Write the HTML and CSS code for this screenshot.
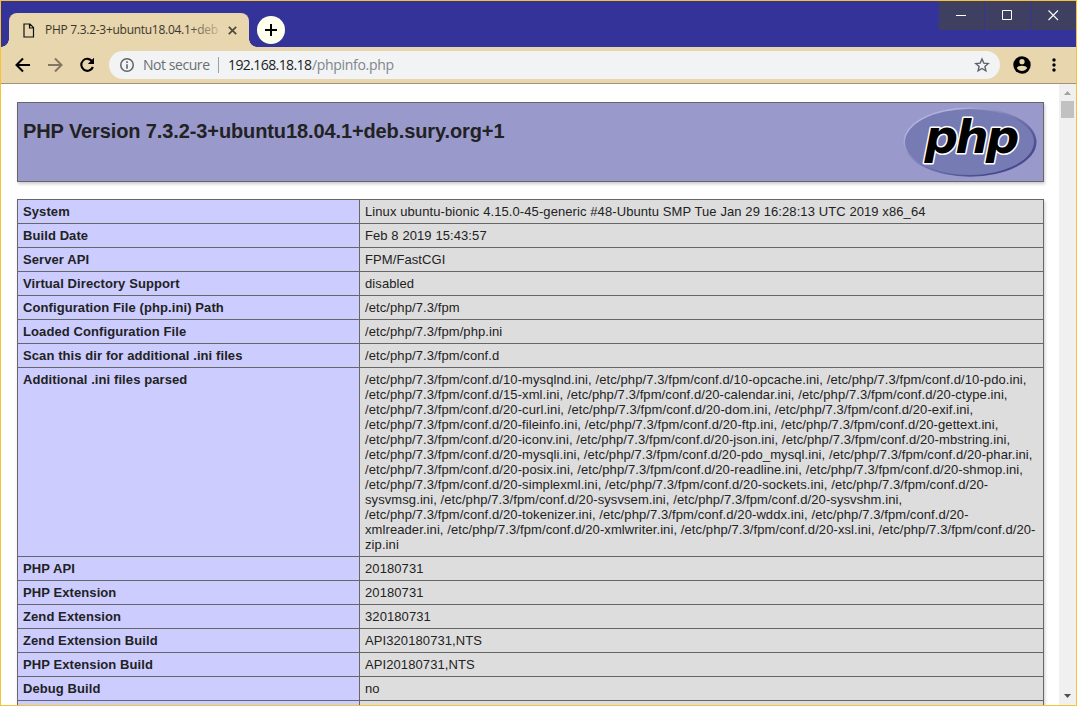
FILE: index.html
```html
<!DOCTYPE html>
<html lang="en">
<head>
<meta charset="utf-8">
<title>PHP 7.3.2-3+ubuntu18.04.1+deb.sury.org+1 - phpinfo()</title>
<link rel="stylesheet" href="styles.css">
</head>
<body>
<div class="window">
  <header class="titlebar">
    <div class="tab">
      <svg class="tab-icon" width="12" height="15" viewBox="0 0 12 15"><path d="M1 1h6l3.500 3.500V14H1z M6.500 1v4H10.500" fill="none" stroke="#111" stroke-width="1.200"/></svg>
      <span class="tab-title"><svg width="174" height="20"><defs><linearGradient id="fade" gradientUnits="userSpaceOnUse" x1="142" x2="175" y1="0" y2="0"><stop offset="0" stop-color="#3b352a"/><stop offset="1" stop-color="#3b352a" stop-opacity=".15"/></linearGradient></defs><text x="0" y="14" textLength="173" fill="url(#fade)">PHP 7.3.2-3+ubuntu18.04.1+deb</text></svg></span>
      <svg class="tab-close" width="9" height="9" viewBox="0 0 9 9"><path d="M.8.8l7.4 7.4M8.2.8L.8 8.2" stroke="#50493b" stroke-width="1.7"/></svg>
    </div>
    <div class="new-tab"><svg width="14" height="14" viewBox="0 0 14 14"><path d="M7 1v12M1 7h12" stroke="#000" stroke-width="2"/></svg></div>
    <div class="controls">
      <div class="control"><svg width="11" height="11"><path d="M0 5.5h10" stroke="#fff"/></svg></div>
      <div class="control"><svg width="11" height="11"><path d="M.5.5h9v9h-9z" fill="none" stroke="#fff"/></svg></div>
      <div class="control"><svg width="11" height="11"><path d="M.5.5l9.500 9.500M10 .5L.5 10" stroke="#fff" stroke-width="1.1"/></svg></div>
    </div>
  </header>
  <nav class="toolbar">
    <svg class="nav-icon" width="16" height="16" viewBox="0 0 16 16"><path d="M15 8H2M8 1.500L1.500 8 8 14.500" fill="none" stroke="#000" stroke-width="2"/></svg>
    <svg class="nav-icon" width="16" height="16" viewBox="0 0 16 16"><path d="M1 8h13M8 1.500L14.500 8 8 14.500" fill="none" stroke="#827763" stroke-width="2"/></svg>
    <svg class="nav-icon" width="16" height="16" viewBox="0 0 16 16"><path d="M13.300 4.500A6 6 0 1 0 13.900 10" fill="none" stroke="#000" stroke-width="2.100"/><path d="M15 .8V7H8.800z"/></svg>
    <div class="omnibox">
      <svg class="info-icon" width="14" height="14" viewBox="0 0 14 14"><circle cx="7" cy="7" r="6.250" fill="none" stroke="#5f6368" stroke-width="1.500"/><path d="M7 3.300v1.700M7 6.200v4.500" stroke="#5f6368" stroke-width="1.600"/></svg>
      <svg class="address" width="260" height="24"><text class="muted" x="0" y="17" textLength="67">Not secure</text><path d="M75.500 4v16" stroke="#9ba0a5"/><text class="host" x="85" y="17" textLength="84">192.168.18.18</text><text class="path" x="169" y="17" textLength="82">/phpinfo.php</text></svg>
      <svg class="star" width="16" height="16" viewBox="0 0 16 16"><path d="M8 2l1.800 4.100 4.400.4-3.300 2.900 1 4.400L8 11.500l-3.900 2.300 1-4.400-3.300-2.900 4.400-.4z" fill="none" stroke="#5f6368" stroke-width="1.400"/></svg>
    </div>
    <svg class="avatar" width="18" height="18" viewBox="0 0 18 18"><circle cx="9" cy="9" r="8.700"/><circle cx="9" cy="5.700" r="2.600" fill="#e7d6ae"/><path d="M3.800 12c1.200-3.100 9.200-3.100 10.400 0-2.400 3.900-8 3.900-10.400 0z" fill="#e7d6ae"/></svg>
    <svg class="menu" width="4" height="14" viewBox="0 0 4 14"><circle cx="2" cy="2" r="1.700"/><circle cx="2" cy="7" r="1.700"/><circle cx="2" cy="12" r="1.700"/></svg>
  </nav>
  <div class="viewport">
    <main class="page">
      <section class="banner">
        <h1>PHP Version 7.3.2-3+ubuntu18.04.1+deb.sury.org+1</h1>
        <svg class="logo" width="134" height="72" viewBox="0 0 134 72">
          <defs><linearGradient id="rim" x1="0" y1="0" x2="1" y2="1"><stop offset=".2" stop-color="#b0b3dc"/><stop offset=".5" stop-color="#7075ae"/><stop offset=".8" stop-color="#484a8d"/></linearGradient></defs>
          <ellipse cx="67" cy="35" rx="66.500" ry="34.700" fill="url(#rim)"/>
          <ellipse cx="66.500" cy="35" rx="64.500" ry="32.900" fill="#777bb3"/>
          <text class="logo-text" x="21.500" y="46" textLength="95">php</text>
        </svg>
      </section>
      <table class="info">
        <tr><th>System</th><td>Linux ubuntu-bionic 4.15.0-45-generic #48-Ubuntu SMP Tue Jan 29 16:28:13 UTC 2019 x86_64</td></tr>
        <tr><th>Build Date</th><td>Feb 8 2019 15:43:57</td></tr>
        <tr><th>Server API</th><td>FPM/FastCGI</td></tr>
        <tr><th>Virtual Directory Support</th><td>disabled</td></tr>
        <tr><th>Configuration File (php.ini) Path</th><td>/etc/php/7.3/fpm</td></tr>
        <tr><th>Loaded Configuration File</th><td>/etc/php/7.3/fpm/php.ini</td></tr>
        <tr><th>Scan this dir for additional .ini files</th><td>/etc/php/7.3/fpm/conf.d</td></tr>
        <tr><th>Additional .ini files parsed</th><td>/etc/php/7.3/fpm/conf.d/10-mysqlnd.ini, /etc/php/7.3/fpm/conf.d/10-opcache.ini, /etc/php/7.3/fpm/conf.d/10-pdo.ini,<br>/etc/php/7.3/fpm/conf.d/15-xml.ini, /etc/php/7.3/fpm/conf.d/20-calendar.ini, /etc/php/7.3/fpm/conf.d/20-ctype.ini,<br>/etc/php/7.3/fpm/conf.d/20-curl.ini, /etc/php/7.3/fpm/conf.d/20-dom.ini, /etc/php/7.3/fpm/conf.d/20-exif.ini,<br>/etc/php/7.3/fpm/conf.d/20-fileinfo.ini, /etc/php/7.3/fpm/conf.d/20-ftp.ini, /etc/php/7.3/fpm/conf.d/20-gettext.ini,<br>/etc/php/7.3/fpm/conf.d/20-iconv.ini, /etc/php/7.3/fpm/conf.d/20-json.ini, /etc/php/7.3/fpm/conf.d/20-mbstring.ini,<br>/etc/php/7.3/fpm/conf.d/20-mysqli.ini, /etc/php/7.3/fpm/conf.d/20-pdo_mysql.ini, /etc/php/7.3/fpm/conf.d/20-phar.ini,<br>/etc/php/7.3/fpm/conf.d/20-posix.ini, /etc/php/7.3/fpm/conf.d/20-readline.ini, /etc/php/7.3/fpm/conf.d/20-shmop.ini,<br>/etc/php/7.3/fpm/conf.d/20-simplexml.ini, /etc/php/7.3/fpm/conf.d/20-sockets.ini, /etc/php/7.3/fpm/conf.d/20-<br>sysvmsg.ini, /etc/php/7.3/fpm/conf.d/20-sysvsem.ini, /etc/php/7.3/fpm/conf.d/20-sysvshm.ini,<br>/etc/php/7.3/fpm/conf.d/20-tokenizer.ini, /etc/php/7.3/fpm/conf.d/20-wddx.ini, /etc/php/7.3/fpm/conf.d/20-<br>xmlreader.ini, /etc/php/7.3/fpm/conf.d/20-xmlwriter.ini, /etc/php/7.3/fpm/conf.d/20-xsl.ini, /etc/php/7.3/fpm/conf.d/20-<br>zip.ini</td></tr>
        <tr><th>PHP API</th><td>20180731</td></tr>
        <tr><th>PHP Extension</th><td>20180731</td></tr>
        <tr><th>Zend Extension</th><td>320180731</td></tr>
        <tr><th>Zend Extension Build</th><td>API320180731,NTS</td></tr>
        <tr><th>PHP Extension Build</th><td>API20180731,NTS</td></tr>
        <tr><th>Debug Build</th><td>no</td></tr>
        <tr><th>&nbsp;</th><td></td></tr>
      </table>
    </main>
    <aside class="scrollbar">
      <svg width="17" height="17"><path d="M5 11h7L8.500 7z" fill="#a3a3a3"/></svg>
      <div class="thumb"></div>
      <svg class="down" width="17" height="17"><path d="M5 6h7l-3.500 4z" fill="#505050"/></svg>
    </aside>
  </div>
</div>
</body>
</html>
```
FILE: styles.css
```css
* { box-sizing: border-box; }
body { margin: 0; overflow: hidden; font-family: "Liberation Sans", Arial, sans-serif; color: #222; }
svg { display: block; flex: none; }
.window { width: 1077px; height: 706px; border: 1px solid #f8c332; display: flex; flex-direction: column; overflow: hidden; background: #fff; }
.titlebar { flex: none; height: 46px; background: #333399; display: flex; align-items: flex-start; }
.tab { position: relative; width: 240px; height: 34px; margin: 12px 0 0 8px; padding: 0 12px 0 14px; background: #e7d6ae; border-radius: 8px 8px 0 0; display: flex; align-items: center; }
.tab::before, .tab::after { content: ""; position: absolute; bottom: 0; width: 8px; height: 8px; }
.tab::before { left: -8px; background: radial-gradient(circle at 0 0, transparent 7.5px, #e7d6ae 8px); }
.tab::after { right: -8px; background: radial-gradient(circle at 100% 0, transparent 7.5px, #e7d6ae 8px); }
.tab-title { margin-left: 10px; font: 12px "Open Sans", "Noto Sans", sans-serif; }
.tab-close { margin-left: auto; }
.new-tab { width: 28px; height: 28px; margin: 15px 0 0 8px; border-radius: 50%; background: #ffffee; display: flex; align-items: center; justify-content: center; }
.controls { margin-left: auto; display: flex; gap: 1px; }
.control { width: 45px; height: 29px; background: #3f3f62; display: flex; align-items: center; justify-content: center; }
.toolbar { flex: none; height: 37px; background: #e7d6ae; border-bottom: 1px solid #a09578; display: flex; align-items: center; padding: 0 20px 0 14px; }
.nav-icon { margin-right: 16px; }
.omnibox { width: 891px; height: 28px; margin-left: -2px; padding: 0 10px 0 11px; border-radius: 14px; background: #f1f3f4; display: flex; align-items: center; }
.address { margin-left: 9px; font: 14px "Open Sans", "Noto Sans", sans-serif; }
.muted { fill: #6b6f73; }
.host { fill: #202124; }
.path { fill: #80868b; }
.star { margin-left: auto; }
.avatar { margin-left: 13px; }
.menu { margin-left: auto; }
.viewport { flex: 1; min-height: 0; display: flex; overflow: hidden; }
.page { flex: 1; padding: 18px 15px 0 16px; overflow: hidden; }
.banner { height: 80px; border: 1px solid #666; background: #9999cc; box-shadow: 1px 2px 3px #ccc; display: flex; justify-content: space-between; padding: 4px 6px 4px 5px; }
h1 { margin: 12px 0 0; font-size: 20px; line-height: 24px; white-space: nowrap; letter-spacing: -.11px; }
.logo-text { font: italic bold 47px "DejaVu Sans", sans-serif; fill: #000; stroke: #fff; stroke-width: 3px; stroke-linejoin: round; paint-order: stroke; }
.info { width: 1027px; margin-top: 17px; border-collapse: collapse; table-layout: fixed; box-shadow: 1px 2px 3px #ccc; }
.info th, .info td { border: 1px solid #666; padding: 4px 5px; font-size: 13px; line-height: 15px; letter-spacing: .09px; text-align: left; vertical-align: top; white-space: nowrap; }
.info th { width: 342px; background: #ccccff; }
.info td { background: #ddd; }
.scrollbar { flex: none; width: 17px; background: #f0f0f0; display: flex; flex-direction: column; align-items: center; }
.thumb { width: 13px; height: 17px; background: #c1c1c1; }
.down { margin-top: auto; }
```
